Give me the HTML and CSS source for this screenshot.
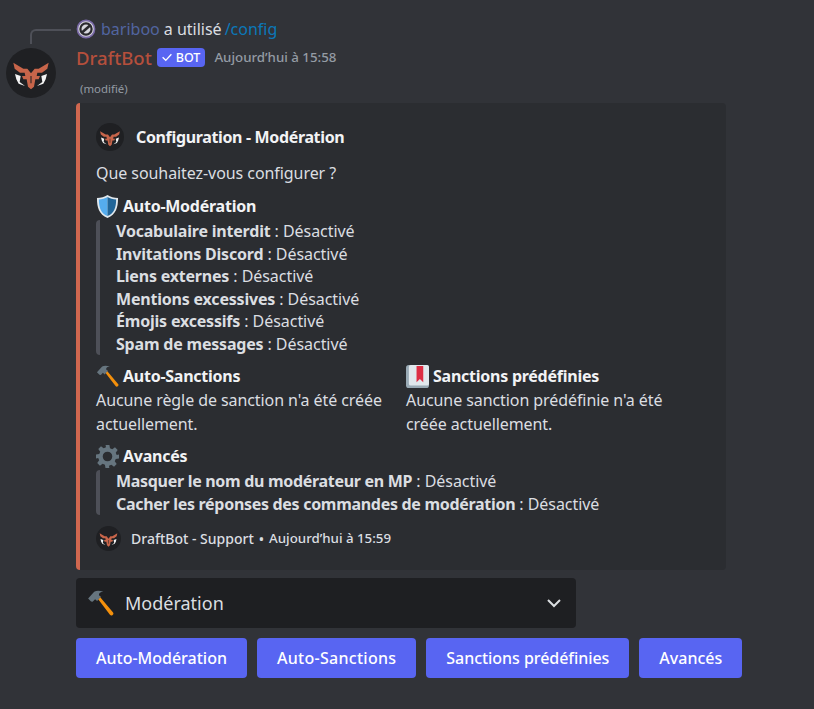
FILE: index.html
```html
<!DOCTYPE html>
<html lang="fr">
<head>
<meta charset="utf-8">
<title>DraftBot</title>
<link rel="stylesheet" href="styles.css">
</head>
<body>
<svg class="defs" width="0" height="0" aria-hidden="true">
  <symbol id="logo" viewBox="0 0 150 150">
    <circle cx="75" cy="75" r="75" fill="#1f2023"/>
    <path fill="#c8654a" d="M22 44 52 62H64L75 76 86 62H98L128 44 124 62 108 74H94L92 84H102L98 94H88L84 116 75 124 66 116 62 94H52L48 84H58L56 74H42L26 62Z"/>
    <path fill="#1f2023" d="M73.500 84h3v22h-3z"/>
    <path fill="#f4f4f4" d="M27 78 44 84 41 102 57 114 38 107 31 94ZM123 78 106 84 109 102 93 114 112 107 119 94Z"/>
  </symbol>
  <symbol id="hammer" viewBox="0 0 24 24">
    <path fill="#f4900c" d="M9.600 7.800 11.400 6 23 19.800a1.600 1.600 0 0 1-2.600 2.200Z"/>
    <path fill="#66757f" d="M1 7.600 6.400 1.600C8.600.2 11.600.6 14.600 1.600 12 1.800 10.400 2.600 10.600 4.600L12.400 6 9 9.800 7.200 8.200 5 10.400 3.600 10.200Z"/>
  </symbol>
</svg>

<main class="message">
  <div class="reply">
    <span class="reply-spine"></span>
    <svg class="reply-avatar" viewBox="0 0 20 20"><circle cx="10" cy="10" r="8.600" fill="#d6d6dc" stroke="#7a6aa8" stroke-width="1.600"/><circle cx="10" cy="10" r="5.600" fill="none" stroke="#2a2a2e" stroke-width="2.200"/><path d="M6 13.500 14 6.500" stroke="#2a2a2e" stroke-width="2.600"/></svg>
    <span class="reply-user">bariboo</span>
    <span class="reply-text">a utilisé</span>
    <span class="reply-cmd">/config</span>
  </div>
  <div class="row">
    <svg class="avatar"><use href="#logo"/></svg>
    <div class="body">
      <header class="head">
        <span class="name">DraftBot</span>
        <span class="tag"><svg class="tag-check" viewBox="0 0 16 16"><path d="M3 8.200 6.600 11.800 13 4.800" fill="none" stroke="#fff" stroke-width="1.500"/></svg>BOT</span>
        <span class="time">Aujourd’hui à 15:58</span>
      </header>
      <div class="edited">(modifié)</div>
      <article class="embed">
        <div class="author"><svg class="author-icon"><use href="#logo"/></svg><span>Configuration - Modération</span></div>
        <p class="desc">Que souhaitez-vous configurer ?</p>

        <section class="field">
          <h3 class="field-title"><svg class="emoji" viewBox="0 0 22 24"><path fill="#e1e8ed" d="M11 0C8 2 4 3 0 3c0 10 2 17 11 21 9-4 11-11 11-21-4 0-8-1-11-3Z"/><path fill="#55acee" d="M11 2C8.500 3.500 5 4.500 2 4.600 2 13 4 19 11 22Z"/><path fill="#226699" d="M11 2c2.500 1.500 6 2.500 9 2.600C20 13 18 19 11 22Z"/></svg>Auto-Modération</h3>
          <blockquote class="quote">
            <div><b>Vocabulaire interdit</b> : Désactivé</div>
            <div><b>Invitations Discord</b> : Désactivé</div>
            <div><b>Liens externes</b> : Désactivé</div>
            <div><b>Mentions excessives</b> : Désactivé</div>
            <div><b>Émojis excessifs</b> : Désactivé</div>
            <div><b>Spam de messages</b> : Désactivé</div>
          </blockquote>
        </section>

        <div class="inline-fields">
          <section>
            <h3 class="field-title"><svg class="emoji"><use href="#hammer"/></svg>Auto-Sanctions</h3>
            <div class="field-text">Aucune règle de sanction n'a été créée actuellement.</div>
          </section>
          <section>
            <h3 class="field-title"><svg class="emoji" viewBox="0 0 24 24"><rect width="24" height="24" rx="3" fill="#99aab5"/><rect x="3" y="0" width="21" height="21.500" rx="2" fill="#e1e8ed"/><path fill="#dd2e44" d="M11 1h7v17l-3.500-3.500L11 18Z"/></svg>Sanctions prédéfinies</h3>
            <div class="field-text">Aucune sanction prédéfinie n'a été créée actuellement.</div>
          </section>
        </div>

        <section class="field field-last">
          <h3 class="field-title"><svg class="emoji" viewBox="0 0 24 24"><path fill="#66757f" fill-rule="evenodd" d="M10 0h4l.6 3.400 2.400 1 2.800-2 2.800 2.800-2 2.800 1 2.400L24 10v4l-3.400.6-1 2.400 2 2.800-2.800 2.800-2.800-2-2.400 1L13.900 24h-4l-.6-3.400-2.400-1-2.800 2-2.800-2.800 2-2.800-1-2.400L0 14v-4l3.400-.6 1-2.400-2-2.800 2.800-2.800 2.800 2 2.400-1ZM12 7a5 5 0 1 0 0 10 5 5 0 0 0 0-10Z"/></svg>Avancés</h3>
          <blockquote class="quote quote-tight">
            <div><b>Masquer le nom du modérateur en MP</b> : Désactivé</div>
            <div><b>Cacher les réponses des commandes de modération</b> : Désactivé</div>
          </blockquote>
        </section>

        <footer class="foot"><svg class="foot-icon"><use href="#logo"/></svg><span>DraftBot - Support</span><span class="dot">•</span><span class="foot-time">Aujourd’hui à 15:59</span></footer>
      </article>

      <div class="select">
        <svg class="select-emoji"><use href="#hammer"/></svg>
        <span class="select-label">Modération</span>
        <svg class="chev" viewBox="0 0 14 14"><path d="M1 4 7 10 13 4" fill="none" stroke="#dbdee1" stroke-width="2"/></svg>
      </div>
      <div class="buttons">
        <button class="btn">Auto-Modération</button>
        <button class="btn btn-wide">Auto-Sanctions</button>
        <button class="btn btn-tight">Sanctions prédéfinies</button>
        <button class="btn">Avancés</button>
      </div>
    </div>
  </div>
</main>
</body>
</html>
```
FILE: styles.css
```css
* { box-sizing: border-box; }
html, body { margin: 0; height: 100%; }
body {
  background: #313338;
  color: #dbdee1;
  font-family: "Noto Sans", sans-serif;
  font-size: 16px;
  overflow: hidden;
}
.defs { position: absolute; }
.message { padding: 20px 0 0 6px; }

.reply {
  position: relative;
  display: flex;
  align-items: center;
  height: 18px;
  margin-left: 70px;
  font-size: 16px;
  white-space: nowrap;
}
.reply-spine {
  position: absolute;
  left: -46px;
  top: 9px;
  width: 41px;
  height: 15px;
  border-left: 2px solid #4e5058;
  border-top: 2px solid #4e5058;
  border-top-left-radius: 6px;
}
.reply-avatar { width: 20px; height: 20px; margin-right: 5px; }
.reply-user { color: #5165a0; margin-right: 4px; }
.reply-text { color: #dbdee1; margin-right: 3px; }
.reply-cmd { color: #0b78b8; }

.row { display: flex; margin-top: 10px; }
.avatar { width: 50px; height: 50px; flex: none; margin-right: 20px; }
.body { width: 720px; flex: none; }

.head { display: flex; align-items: center; height: 26px; margin-top: -4px; white-space: nowrap; }
.name { color: #b54f3c; font-size: 18.500px; font-weight: 500; }
.tag {
  display: flex;
  align-items: center;
  height: 19px;
  margin-left: 5px;
  padding: 0 5px 0 3px;
  background: #5865f2;
  border-radius: 4px;
  color: #fff;
  font-size: 12.500px;
  font-weight: 500;
}
.tag-check { width: 14px; height: 14px; margin-right: 2px; }
.time { margin-left: 9px; color: #949ba4; font-size: 13.300px; font-weight: 500; }
.edited { margin: 12px 0 0 4px; color: #949ba4; font-size: 11.400px; line-height: 13px; }

.embed {
  width: 650px;
  margin-top: 8px;
  padding: 20px 16px 20px 16px;
  background: #2b2d31;
  border-left: 4px solid #d0674f;
  border-radius: 4px;
}
.author { display: flex; align-items: center; gap: 12px; height: 28px; color: #f2f3f5; font-weight: 700; font-size: 16px; letter-spacing: -0.35px; }
.author-icon { width: 28px; height: 28px; }
.desc { margin: 11px 0 0; line-height: 22px; font-size: 16px; letter-spacing: -0.07px; }
.field { margin-top: 10px; }
.field-title {
  display: flex;
  align-items: center;
  height: 24px;
  margin: 0 0 2px;
  color: #f2f3f5;
  font-size: 16px;
  font-weight: 700;
  letter-spacing: -0.25px;
}
.emoji { width: 23px; height: 23px; margin-right: 4px; flex: none; }
.quote { margin: 0; padding-left: 16px; border-left: 4px solid #4e5058; border-radius: 4px; font-size: 16px; line-height: 22.500px; letter-spacing: -0.05px; }
.quote b { font-weight: 700; color: #dbdee1; letter-spacing: -0.2px; }
.quote-tight b { letter-spacing: -0.3px; }
.inline-fields { display: grid; grid-template-columns: 310px 310px; margin-top: 9px; }
.inline-fields .field-title { margin-bottom: 0; }
.inline-fields section { padding-right: 16px; }
.field-text { line-height: 24px; font-size: 16px; letter-spacing: -0.08px; }
.field-last { margin-top: 8px; }
.foot { display: flex; align-items: center; height: 24px; margin-top: 11px; font-size: 14px; font-weight: 500; color: #dbdee1; }
.foot-icon { width: 25px; height: 25px; margin-right: 10px; }
.foot-time { font-size: 13.300px; }
.dot { margin: 0 5px; }

.select {
  display: flex;
  align-items: center;
  width: 500px;
  height: 50px;
  margin-top: 8px;
  padding: 0 15px 0 11px;
  background: #1e1f22;
  border-radius: 4px;
}
.select-emoji { width: 27px; height: 27px; margin-right: 11px; }
.select-label { flex: 1; font-size: 18px; color: #dbdee1; }
.chev { width: 14px; height: 14px; }
.buttons { display: flex; gap: 10px; margin-top: 10px; }
.btn {
  flex: none;
  height: 40px;
  padding: 0 20px;
  border: 0;
  border-radius: 4px;
  background: #5865f2;
  color: #fff;
  font: 500 16px "Noto Sans", sans-serif;
  white-space: nowrap;
}
.btn-wide { letter-spacing: 0.28px; }
.btn-tight { letter-spacing: -0.05px; }
```
